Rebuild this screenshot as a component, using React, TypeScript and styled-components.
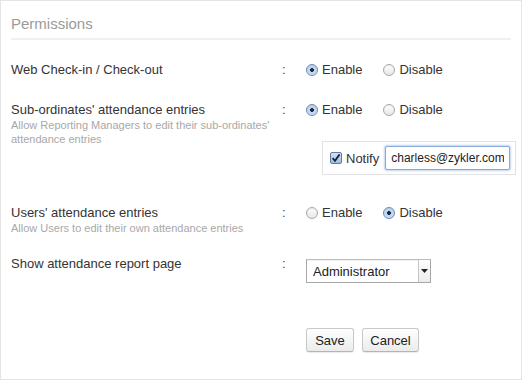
import styled, { createGlobalStyle } from 'styled-components';

const GlobalStyle = createGlobalStyle`
  html, body {
    margin: 0;
    padding: 0;
    background: #ffffff;
  }
  body {
    font-family: 'Liberation Sans', Arial, sans-serif;
    color: #333333;
  }
`;

const Card = styled.div`
  box-sizing: border-box;
  width: 522px;
  height: 380px;
  border: 1px solid #e4e4e4;
  padding: 0 10px;
  background: #fff;
`;

const Header = styled.div`
  padding-top: 14px;
  padding-bottom: 5px;
  border-bottom: 2px solid #f0f0f0;
  margin-bottom: 22px;
`;

const Title = styled.h2`
  margin: 0;
  font-size: 15px;
  line-height: 18px;
  font-weight: normal;
  color: #9a9a9a;
`;

const Row = styled.div<{ $gap?: number }>`
  display: grid;
  grid-template-columns: 271px 24px 210px;
  align-items: start;
  margin-top: ${(p) => p.$gap ?? 0}px;
`;

const LabelCol = styled.div`
  display: flex;
  flex-direction: column;
`;

const Label = styled.div`
  font-size: 13px;
  line-height: 16px;
  color: #333;
`;

const Hint = styled.div`
  font-size: 11px;
  line-height: 14px;
  color: #a8a8a8;
`;

const Colon = styled.div`
  font-size: 13px;
  line-height: 16px;
  color: #444;
`;

const Control = styled.div<{ $top?: number }>`
  display: flex;
  flex-direction: column;
  align-items: flex-start;
  margin-top: ${(p) => p.$top ?? 0}px;
`;

const RadioGroup = styled.div`
  display: flex;
  align-items: center;
  height: 16px;
`;

const RadioLabel = styled.label`
  display: flex;
  align-items: center;
  gap: 4px;
  font-size: 13px;
  line-height: 16px;
  color: #333;
  margin-right: 21px;
`;

const RadioDot = styled.span<{ $on?: boolean }>`
  box-sizing: border-box;
  width: 12px;
  height: 12px;
  border-radius: 50%;
  border: 1px solid ${(p) => (p.$on ? '#6d86ad' : '#a9a9a9')};
  background: ${(p) =>
    p.$on
      ? 'radial-gradient(circle at 50% 50%, #1d2a3a 0 1.6px, #b9d3f2 2.2px, #d8e8fa 100%)'
      : 'linear-gradient(#ffffff, #e6e6e6)'};
  box-shadow: inset 0 1px 1px rgba(0, 0, 0, 0.08);
`;

const NotifyBox = styled.div`
  box-sizing: border-box;
  display: flex;
  align-items: center;
  width: 194px;
  height: 34px;
  margin-left: 16px;
  margin-top: 23px;
  padding: 0 6px 0 7px;
  border: 1px solid #e2e2e2;
`;

const CheckLabel = styled.label`
  display: flex;
  align-items: center;
  gap: 4px;
  font-size: 13px;
  color: #333;
  margin-right: 6px;
`;

const TextInput = styled.input`
  box-sizing: border-box;
  width: 125px;
  height: 24px;
  padding: 0 5px;
  font-family: 'Liberation Sans', Arial, sans-serif;
  font-size: 12px;
  color: #222;
  border: 1px solid #86a9d6;
  border-radius: 2px;
  box-shadow: 0 0 2px 1px rgba(120, 160, 220, 0.45);
  outline: none;
`;

const Select = styled.div`
  box-sizing: border-box;
  display: flex;
  align-items: stretch;
  width: 125px;
  height: 24px;
  border: 1px solid #a8a8a8;
  border-top-color: #bdbdbd;
  background: #fff;
  box-shadow: inset 0 1px 1px rgba(0, 0, 0, 0.06);
`;

const SelectText = styled.span`
  flex: 1;
  display: flex;
  align-items: center;
  padding-left: 6px;
  font-size: 13px;
  color: #222;
`;

const SelectArrow = styled.span`
  width: 11px;
  display: flex;
  align-items: center;
  justify-content: center;
  border-left: 1px solid #c4c4c4;
  background: linear-gradient(#ffffff, #ececec);
`;

const Buttons = styled.div`
  display: flex;
  gap: 8px;
`;

const Button = styled.button<{ $w: number }>`
  box-sizing: border-box;
  width: ${(p) => p.$w}px;
  height: 24px;
  padding: 0;
  font-family: 'Liberation Sans', Arial, sans-serif;
  font-size: 13px;
  color: #222;
  border: 1px solid #c8c8c8;
  border-bottom-color: #b4b4b4;
  border-radius: 3px;
  background: linear-gradient(#ffffff, #ebebeb);
  box-shadow: 0 1px 1px rgba(0, 0, 0, 0.08);
`;

const CheckIcon = () => (
  <svg width="12" height="12" viewBox="0 0 12 12">
    <defs>
      <linearGradient id="cbg" x1="0" y1="0" x2="0" y2="1">
        <stop offset="0" stopColor="#d4e4f8" />
        <stop offset="1" stopColor="#9dbce4" />
      </linearGradient>
    </defs>
    <rect x="0.5" y="0.5" width="11" height="11" rx="1.5" fill="url(#cbg)" stroke="#5f7aa3" />
    <path d="M2.6 6.2 L5 8.8 L9.6 2.4" fill="none" stroke="#1a2433" strokeWidth="1.8" />
  </svg>
);

const Radio = ({ on, text }: { on?: boolean; text: string }) => (
  <RadioLabel>
    <RadioDot $on={on} />
    {text}
  </RadioLabel>
);

export default function App() {
  return (
    <>
      <GlobalStyle />
      <Card>
        <Header>
          <Title>Permissions</Title>
        </Header>

        <Row>
          <LabelCol>
            <Label>Web Check-in / Check-out</Label>
          </LabelCol>
          <Colon>:</Colon>
          <Control>
            <RadioGroup>
              <Radio on text="Enable" />
              <Radio text="Disable" />
            </RadioGroup>
          </Control>
        </Row>

        <Row $gap={24}>
          <LabelCol>
            <Label>Sub-ordinates' attendance entries</Label>
            <Hint>
              Allow Reporting Managers to edit their sub-ordinates'
              <br />
              attendance entries
            </Hint>
          </LabelCol>
          <Colon>:</Colon>
          <Control>
            <RadioGroup>
              <Radio on text="Enable" />
              <Radio text="Disable" />
            </RadioGroup>
            <NotifyBox>
              <CheckLabel>
                <CheckIcon />
                Notify
              </CheckLabel>
              <TextInput defaultValue="charless@zykler.com" />
            </NotifyBox>
          </Control>
        </Row>

        <Row $gap={30}>
          <LabelCol>
            <Label>Users' attendance entries</Label>
            <Hint>Allow Users to edit their own attendance entries</Hint>
          </LabelCol>
          <Colon>:</Colon>
          <Control>
            <RadioGroup>
              <Radio text="Enable" />
              <Radio on text="Disable" />
            </RadioGroup>
          </Control>
        </Row>

        <Row $gap={21}>
          <LabelCol>
            <Label>Show attendance report page</Label>
          </LabelCol>
          <Colon>:</Colon>
          <Control $top={3}>
            <Select>
              <SelectText>Administrator</SelectText>
              <SelectArrow>
                <svg width="7" height="4" viewBox="0 0 7 4">
                  <path d="M0 0 H7 L3.5 4 Z" fill="#222" />
                </svg>
              </SelectArrow>
            </Select>
          </Control>
        </Row>

        <Row $gap={45}>
          <div />
          <div />
          <Control>
            <Buttons>
              <Button $w={48}>Save</Button>
              <Button $w={57}>Cancel</Button>
            </Buttons>
          </Control>
        </Row>
      </Card>
    </>
  );
}
